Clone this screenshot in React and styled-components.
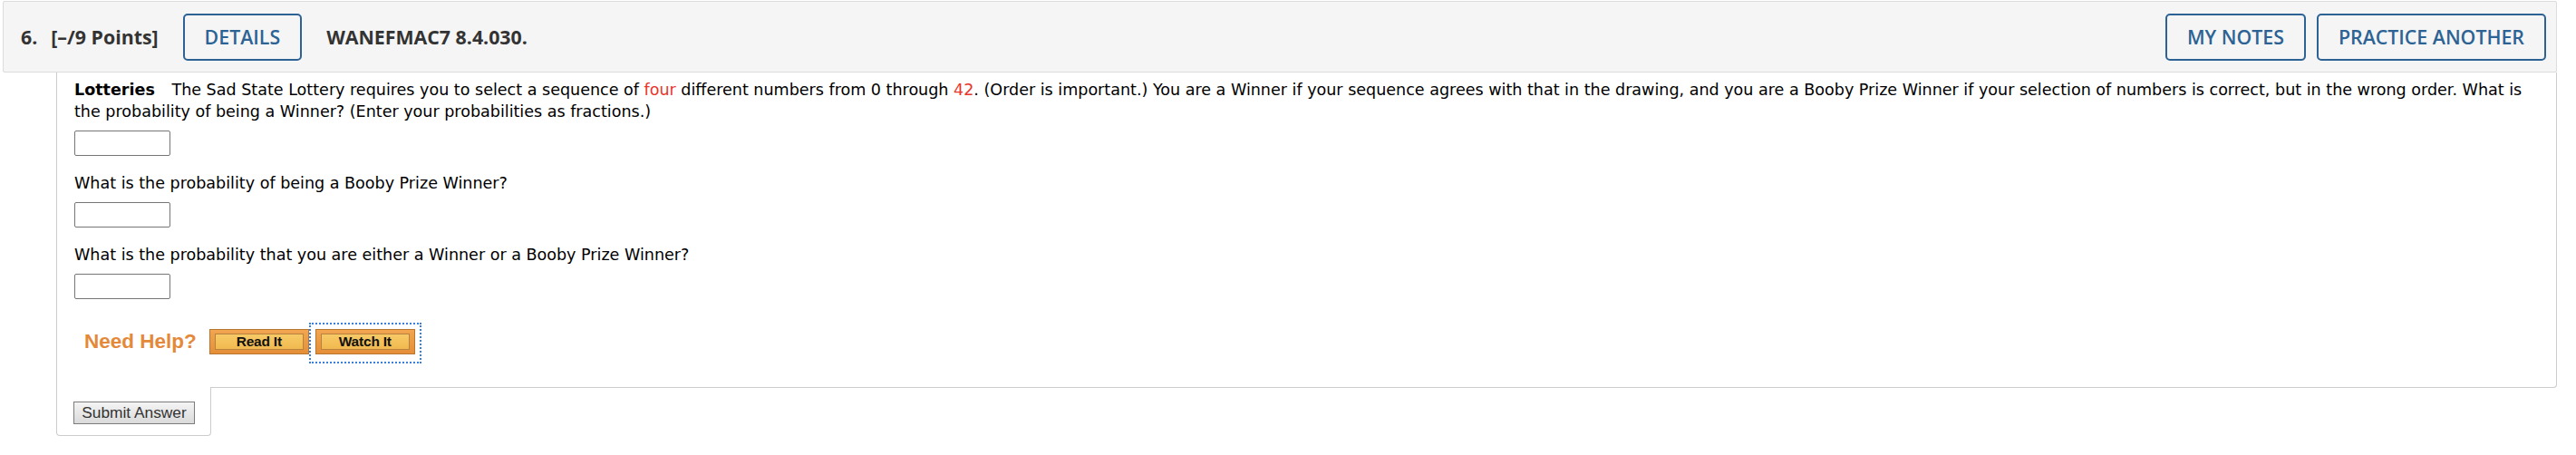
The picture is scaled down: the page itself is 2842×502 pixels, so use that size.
import React from 'react';
import styled, { createGlobalStyle } from 'styled-components';

const GlobalStyle = createGlobalStyle`
  html, body {
    margin: 0;
    padding: 0;
    background: #fff;
    overflow: hidden;
  }
  body {
    font-family: "DejaVu Sans", Verdana, sans-serif;
  }
`;

const questions = [
  'What is the probability of being a Booby Prize Winner?',
  'What is the probability that you are either a Winner or a Booby Prize Winner?',
];

function App() {
  return (
    <Page>
      <GlobalStyle />
      <QuestionHeader>
        <Number>6.</Number>
        <Points>[–/9 Points]</Points>
        <HeaderButton $first>DETAILS</HeaderButton>
        <Title>WANEFMAC7 8.4.030.</Title>
        <Spacer />
        <HeaderButton>MY NOTES</HeaderButton>
        <HeaderButton>PRACTICE ANOTHER</HeaderButton>
      </QuestionHeader>

      <Body>
        <Prompt>
          <Topic>Lotteries</Topic> The Sad State Lottery requires you to select a sequence of{' '}
          <Red>four</Red> different numbers from 0 through <Red>42</Red>. (Order is important.) You are
          a Winner if your sequence agrees with that in the drawing, and you are a Booby Prize Winner if
          your selection of numbers is correct, but in the wrong order. What is the probability of being
          a Winner? (Enter your probabilities as fractions.)
        </Prompt>
        <AnswerBox />

        {questions.map((q) => (
          <React.Fragment key={q}>
            <Prompt $spaced>{q}</Prompt>
            <AnswerBox />
          </React.Fragment>
        ))}

        <HelpRow>
          <NeedHelp>Need Help?</NeedHelp>
          <HelpButton>
            <HelpFace>Read It</HelpFace>
          </HelpButton>
          <FocusRing>
            <HelpButton>
              <HelpFace>Watch It</HelpFace>
            </HelpButton>
          </FocusRing>
        </HelpRow>
      </Body>

      <SubmitTab>
        <SubmitButton>Submit Answer</SubmitButton>
      </SubmitTab>

      <NextQuestion />
    </Page>
  );
}

const Page = styled.div`
  padding: 1px 21px 0 3px;
`;

const QuestionHeader = styled.div`
  display: flex;
  align-items: center;
  height: 79px;
  box-sizing: border-box;
  padding: 0 11px 0 19px;
  background: #f5f5f5;
  border: 1px solid #dcdcdc;
  border-radius: 2px;
  font-family: "Open Sans", "DejaVu Sans", sans-serif;
  font-size: 21.33px;
  color: #333;
`;

const Number = styled.span`
  font-weight: 700;
`;

const Points = styled.span`
  font-weight: 700;
  margin-left: 15px;
`;

const Title = styled.span`
  font-weight: 700;
  margin-left: 27px;
`;

const Spacer = styled.div`
  flex: 1;
`;

const HeaderButton = styled.button`
  height: 52px;
  box-sizing: border-box;
  padding: 0 22px;
  margin-left: ${({ $first }) => ($first ? '27px' : '12px')};
  background: transparent;
  border: 2px solid #2d6394;
  border-radius: 5px;
  font-family: "Open Sans", "DejaVu Sans", sans-serif;
  font-size: 21.33px;
  font-weight: 600;
  color: #2d6394;
`;

const Body = styled.div`
  margin-left: 59px;
  padding: 7px 19px 36px 19px;
  border: 1px solid #cccccc;
  border-top: none;
  border-bottom-right-radius: 4px;
  font-size: 17.55px;
  line-height: 24.3px;
  color: #000;
`;

const Prompt = styled.div`
  margin-top: ${({ $spaced }) => ($spaced ? '18px' : '0')};
`;

const Topic = styled.b`
  margin-right: 13px;
`;

const Red = styled.span`
  color: #e8352b;
`;

const AnswerBox = styled.div`
  width: 106px;
  height: 28px;
  box-sizing: border-box;
  margin-top: 8.5px;
  border: 1px solid #767676;
  border-radius: 2px;
  background: #fff;
`;

const HelpRow = styled.div`
  display: flex;
  align-items: center;
  height: 28px;
  margin-top: 33px;
  padding-left: 11px;
`;

const NeedHelp = styled.span`
  margin-right: 14px;
  font-family: "Liberation Sans", Arial, sans-serif;
  font-size: 22.5px;
  font-weight: 700;
  color: #e4893a;
`;

const HelpButton = styled.span`
  display: flex;
  box-sizing: border-box;
  width: 110px;
  height: 28px;
  padding: 4px 5px;
  background: linear-gradient(#f2a64f, #e58f38);
  border: 1px solid #b87530;
`;

const HelpFace = styled.span`
  flex: 1;
  display: flex;
  align-items: center;
  justify-content: center;
  background: linear-gradient(#f7ca67, #f1b94f);
  border: 1px solid #b7823f;
  font-family: "Liberation Sans", Arial, sans-serif;
  font-size: 15.5px;
  font-weight: 700;
  letter-spacing: -0.2px;
  color: #111;
`;

const FocusRing = styled.span`
  display: block;
  margin-left: 7px;
  padding-bottom: 3px;
  margin-bottom: -3px;
  outline: 2px dotted #3a7fdc;
  outline-offset: 5px;
`;

const SubmitTab = styled.div`
  width: 171px;
  box-sizing: border-box;
  margin: -1px 0 0 59px;
  padding: 16px 0 12px 18px;
  background: #fff;
  border: 1px solid #cccccc;
  border-top: none;
  border-radius: 0 0 4px 4px;
`;

const SubmitButton = styled.button`
  display: block;
  width: 134px;
  height: 25px;
  padding: 0;
  background: linear-gradient(#f4f4f4, #dadada);
  border: 1px solid #7c7c7c;
  border-radius: 0;
  font-family: "Liberation Sans", Arial, sans-serif;
  font-size: 17.33px;
  color: #333;
`;

const NextQuestion = styled.div`
  height: 2px;
  margin-top: 21px;
  background: #f5f5f5;
  border-top: 1px solid #dcdcdc;
`;

export default App;
